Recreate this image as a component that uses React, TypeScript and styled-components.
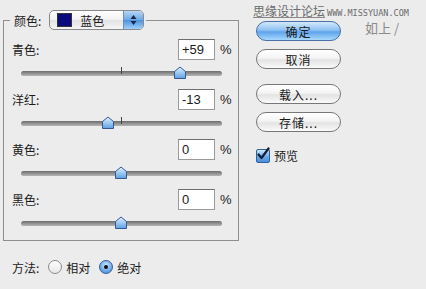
import React, { useState } from 'react';
import styled, { createGlobalStyle } from 'styled-components';

const Global = createGlobalStyle`
  html, body {
    margin: 0;
    padding: 0;
    background: #ececec;
  }
  body {
    font-family: "Noto Sans CJK SC", "Noto Sans", sans-serif;
    font-size: 12px;
    color: #1a1a1a;
  }
`;

const Dialog = styled.div`
  position: relative;
  width: 426px;
  height: 289px;
  display: flex;
  background: #ececec;
  overflow: hidden;
`;

const LeftCol = styled.div`
  width: 240px;
  padding-left: 3px;
  display: flex;
  flex-direction: column;
`;

const Group = styled.fieldset`
  margin: 0;
  margin-top: 9px;
  width: 236px;
  box-sizing: border-box;
  border: 1px solid #8e8e8e;
  padding: 8px 0 1px 8px;
  min-width: 0;
`;

const Legend = styled.legend`
  margin-left: -2px;
  padding: 0 2px 0 4px;
  display: flex;
  align-items: center;
  gap: 8px;
  height: 22px;
`;

const PopUp = styled.div`
  width: 95px;
  height: 20px;
  border: 1px solid #8a8a8a;
  border-radius: 5px;
  background: linear-gradient(#ffffff, #f1f1f1 50%, #e2e2e2 51%, #f6f6f6);
  display: flex;
  align-items: center;
  overflow: hidden;
  box-sizing: border-box;
`;

const Swatch = styled.span<{ $color: string }>`
  width: 15px;
  height: 14px;
  margin-left: 7px;
  background: ${p => p.$color};
  border: 1px solid #333;
  box-sizing: border-box;
`;

const PopText = styled.span`
  flex: 1;
  padding-left: 8px;
`;

const Stepper = styled.span`
  width: 19px;
  align-self: stretch;
  background: linear-gradient(#b7d6f5, #6aa7e6 50%, #4c90df 51%, #9ed0fb);
  border-left: 1px solid #6a8fbf;
  display: flex;
  align-items: center;
  justify-content: center;
`;

const Channel = styled.div`
  display: flex;
  flex-direction: column;
  height: 50px;
  padding-right: 5px;
`;

const LabelRow = styled.div`
  display: flex;
  align-items: center;
  height: 21px;
`;

const Label = styled.span`
  flex: 1;
  line-height: 21px;
`;

const NumBox = styled.div`
  width: 37px;
  height: 21px;
  box-sizing: border-box;
  border: 1px solid #9a9a9a;
  border-top-color: #6e6e6e;
  background: #fff;
  padding-left: 3px;
  line-height: 19px;
  font-family: "Liberation Sans", Arial, sans-serif;
  font-size: 13px;
`;

const Pct = styled.span`
  width: 13px;
  padding-left: 5px;
  font-family: "Liberation Sans", Arial, sans-serif;
  font-size: 13px;
`;

const SliderArea = styled.div`
  position: relative;
  height: 29px;
  margin-left: 9px;
  width: 201px;
`;

const Track = styled.div`
  position: absolute;
  left: 0;
  right: 0;
  top: 11px;
  height: 5px;
  border-radius: 3px;
  background: linear-gradient(#6c6c6c, #9a9a9a 60%, #b4b4b4);
`;

const Tick = styled.div`
  position: absolute;
  left: 100px;
  top: 7px;
  width: 1px;
  height: 7px;
  background: #444;
`;

const Thumb = styled.div`
  position: absolute;
  top: 6px;
  margin-left: -7px;
  width: 14px;
  height: 14px;
`;

const MethodRow = styled.div`
  display: flex;
  align-items: center;
  margin-top: 15px;
  padding-left: 9px;
  height: 22px;
`;

const RadioLabel = styled.label`
  display: flex;
  align-items: center;
  gap: 4px;
  margin-left: 9px;
`;

const RadioDot = styled.span<{ $on: boolean }>`
  width: 14px;
  height: 14px;
  border-radius: 50%;
  box-sizing: border-box;
  border: 1px solid ${p => (p.$on ? '#2f5f9d' : '#8a8a8a')};
  background: ${p =>
    p.$on
      ? 'radial-gradient(circle at 50% 35%, #cfe6fb, #6ea9e6 60%, #3f84d6)'
      : 'linear-gradient(#ffffff, #e6e6e6)'};
  display: flex;
  align-items: center;
  justify-content: center;
  &::after {
    content: '';
    width: 4px;
    height: 4px;
    border-radius: 50%;
    background: #111;
    display: ${p => (p.$on ? 'block' : 'none')};
  }
`;

const RightCol = styled.div`
  display: flex;
  flex-direction: column;
  padding-left: 13px;
  padding-top: 21px;
`;

const Button = styled.div<{ $default?: boolean; $gap?: number }>`
  width: 85px;
  height: 20px;
  box-sizing: border-box;
  margin-top: ${p => p.$gap ?? 0}px;
  border-radius: 10px;
  border: 1px solid ${p => (p.$default ? '#4a6fa6' : '#777')};
  background: ${p =>
    p.$default
      ? 'linear-gradient(#d3e8fb, #8ec2f2 45%, #5fa3ea 55%, #a6d8fd)'
      : 'linear-gradient(#ffffff, #f4f4f4 45%, #e3e3e3 55%, #fafafa)'};
  display: flex;
  align-items: center;
  justify-content: center;
  font-size: 12px;
  letter-spacing: 1px;
`;

const CheckRow = styled.label`
  display: flex;
  align-items: center;
  gap: 4px;
  margin-top: 15px;
`;

const CheckBox = styled.span`
  width: 14px;
  height: 14px;
  box-sizing: border-box;
  border: 1px solid #2f5f9d;
  border-radius: 2px;
  background: linear-gradient(#cfe6fb, #6ea9e6 55%, #4b8fdc);
  position: relative;
`;

const Watermark = styled.div`
  position: absolute;
  left: 253px;
  top: 3px;
  display: flex;
  align-items: baseline;
  gap: 2px;
  color: #6a6a6a;
  white-space: nowrap;
  line-height: 15px;
`;

const WmCn = styled.span`
  font-size: 12px;
  text-decoration: underline;
  text-decoration-color: #888;
`;

const WmEn = styled.span`
  font-family: "DejaVu Sans Mono", monospace;
  font-size: 8.5px;
`;

const Note = styled.div`
  position: absolute;
  left: 365px;
  top: 20px;
  color: #8a8a8a;
  font-size: 13px;
  line-height: 15px;
`;

const ThumbIcon = () => (
  <svg width="14" height="14" viewBox="0 0 14 14">
    <defs>
      <linearGradient id="tg" x1="0" y1="0" x2="0" y2="1">
        <stop offset="0" stopColor="#e4f1fd" />
        <stop offset="0.5" stopColor="#9fcaf3" />
        <stop offset="1" stopColor="#5f9fe2" />
      </linearGradient>
    </defs>
    <path d="M7 1 L12.5 5.5 L12.5 12.5 L1.5 12.5 L1.5 5.5 Z" fill="url(#tg)" stroke="#36598a" strokeWidth="1" strokeLinejoin="round" />
  </svg>
);

interface IChannel {
  name: string;
  value: string;
  pos: number;
  tick: boolean;
}

const channels: IChannel[] = [
  { name: '青色:', value: '+59', pos: 159, tick: true },
  { name: '洋红:', value: '-13', pos: 87, tick: true },
  { name: '黄色:', value: '0', pos: 100, tick: false },
  { name: '黑色:', value: '0', pos: 100, tick: false },
];

const ChannelRow: React.FC<{ ch: IChannel }> = ({ ch }) => (
  <Channel>
    <LabelRow>
      <Label>{ch.name}</Label>
      <NumBox>{ch.value}</NumBox>
      <Pct>%</Pct>
    </LabelRow>
    <SliderArea>
      <Track />
      {ch.tick && <Tick />}
      <Thumb style={{ left: ch.pos }}>
        <ThumbIcon />
      </Thumb>
    </SliderArea>
  </Channel>
);

const App: React.FC = () => {
  const [absolute] = useState(true);

  return (
    <Dialog>
      <Global />
      <LeftCol>
        <Group>
          <Legend>
            <span>颜色:</span>
            <PopUp>
              <Swatch $color="#0b0b7e" />
              <PopText>蓝色</PopText>
              <Stepper>
                <svg width="7" height="12" viewBox="0 0 7 12">
                  <path d="M3.5 1 L6.5 5 L0.5 5 Z" fill="#1b2a44" />
                  <path d="M3.5 11 L6.5 7 L0.5 7 Z" fill="#1b2a44" />
                </svg>
              </Stepper>
            </PopUp>
          </Legend>
          {channels.map(ch => (
            <ChannelRow key={ch.name} ch={ch} />
          ))}
        </Group>
        <MethodRow>
          <span>方法:</span>
          <RadioLabel>
            <RadioDot $on={!absolute} />
            相对
          </RadioLabel>
          <RadioLabel>
            <RadioDot $on={absolute} />
            绝对
          </RadioLabel>
        </MethodRow>
      </LeftCol>
      <RightCol>
        <Button $default>确定</Button>
        <Button $gap={8}>取消</Button>
        <Button $gap={15}>载入...</Button>
        <Button $gap={8}>存储...</Button>
        <CheckRow>
          <CheckBox>
            <svg width="14" height="14" viewBox="0 0 14 14" style={{ position: 'absolute', left: -1, top: -3 }}>
              <path d="M2.5 7.5 L5.5 11 L12.5 1.5" fill="none" stroke="#10203a" strokeWidth="2.2" strokeLinecap="round" strokeLinejoin="round" />
            </svg>
          </CheckBox>
          预览
        </CheckRow>
      </RightCol>
      <Watermark>
        <WmCn>思缘设计论坛</WmCn>
        <WmEn>WWW.MISSYUAN.COM</WmEn>
      </Watermark>
      <Note>如上 /</Note>
    </Dialog>
  );
};

export default App;
